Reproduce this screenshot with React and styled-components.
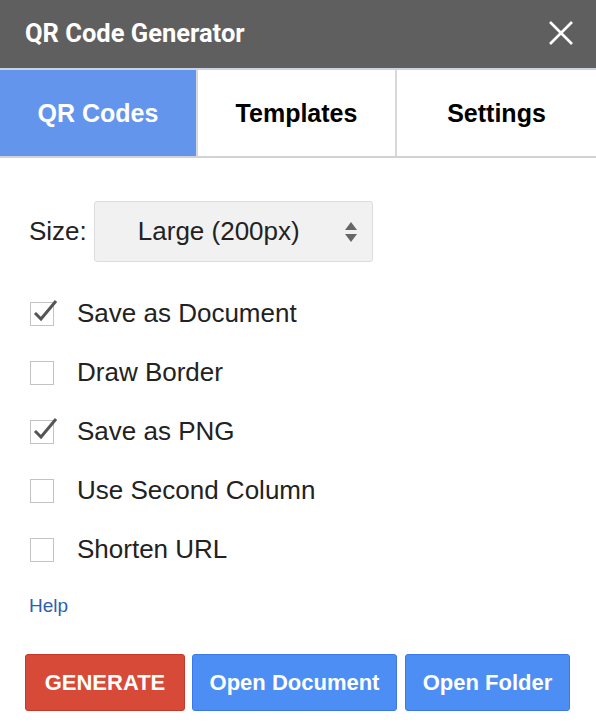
import React from "react";
import styled, { createGlobalStyle } from "styled-components";

const GlobalStyle = createGlobalStyle`
  html, body {
    margin: 0;
    padding: 0;
    background: #ffffff;
  }
  body {
    font-family: "Liberation Sans", Arial, sans-serif;
  }
`;

const Dialog = styled.div`
  width: 596px;
  height: 725px;
  display: flex;
  flex-direction: column;
  background: #fff;
  overflow: hidden;
`;

const TitleBar = styled.div`
  height: 68px;
  background: #5f5f5f;
  display: flex;
  align-items: center;
  justify-content: space-between;
  padding: 0 22px 2px 25px;
  box-sizing: border-box;
`;

const Title = styled.h1`
  margin: 0;
  font-family: Roboto, "Liberation Sans", sans-serif;
  font-weight: 700;
  font-size: 25.5px;
  color: #fff;
`;

const CloseButton = styled.button`
  border: 0;
  background: none;
  padding: 0;
  width: 26px;
  height: 26px;
  display: flex;
  cursor: pointer;
`;

const TabBar = styled.div`
  display: flex;
  height: 90px;
  border-top: 2px solid #c9d4e4;
  border-bottom: 2px solid #d2d2d2;
  box-sizing: border-box;
`;

const Tab = styled.div`
  flex: ${(p) => p.$w} 0 0;
  display: flex;
  align-items: center;
  justify-content: center;
  font-family: "Liberation Sans", Arial, sans-serif;
  font-weight: 700;
  font-size: 25px;
  color: ${(p) => (p.$active ? "#fff" : "#000")};
  background: ${(p) => (p.$active ? "#6495ed" : "#fff")};
  & + & {
    border-left: 2px solid #d8d8d8;
  }
`;

const Body = styled.div`
  padding: 43px 29px 0;
  display: flex;
  flex-direction: column;
`;

const SizeRow = styled.div`
  display: flex;
  align-items: center;
  gap: 7px;
`;

const Label = styled.span`
  font-size: 26px;
  color: #222;
`;

const Select = styled.div`
  width: 279px;
  height: 61px;
  box-sizing: border-box;
  border: 1px solid #dcdcdc;
  border-radius: 3px;
  background: #f1f1f1;
  display: flex;
  align-items: center;
  padding: 0 14px 0 43px;
  font-size: 26px;
  color: #222;
  justify-content: space-between;
`;

const Options = styled.div`
  margin-top: 22px;
  display: flex;
  flex-direction: column;
`;

const OptionRow = styled.label`
  height: 59px;
  display: flex;
  align-items: center;
  gap: 23px;
  font-size: 26px;
  color: #222;
`;

const Box = styled.span`
  position: relative;
  width: 24px;
  height: 24px;
  margin-left: 1px;
  box-sizing: border-box;
  border: 1px solid #c3c3c3;
  background: #fff;
  flex: none;
`;

const Tick = styled.svg`
  position: absolute;
  left: 0;
  top: -7px;
`;

const HelpLink = styled.a`
  margin-top: 15px;
  font-size: 19px;
  color: #2d5fb0;
  text-decoration: none;
  line-height: 24px;
`;

const Buttons = styled.div`
  display: flex;
  margin-top: 36px;
  margin-left: -4px;
`;

const Button = styled.button`
  flex: none;
  height: 57px;
  width: ${(p) => p.$w}px;
  margin-left: ${(p) => p.$gap || 0}px;
  border-radius: 3px;
  border: 1px solid ${(p) => (p.$red ? "#c53727" : "#3b78e7")};
  background: ${(p) => (p.$red ? "#d84a38" : "#4d8ef5")};
  color: #fff;
  font-family: "Liberation Sans", Arial, sans-serif;
  font-weight: 700;
  font-size: 22px;
  padding: 0;
`;

const options = [
  { label: "Save as Document", checked: true },
  { label: "Draw Border", checked: false },
  { label: "Save as PNG", checked: true },
  { label: "Use Second Column", checked: false },
  { label: "Shorten URL", checked: false },
];

const Checkbox = ({ checked }) => (
  <Box>
    {checked && (
      <Tick width="28" height="28" viewBox="0 0 28 28">
        <path d="M4 17 L10 23 L25 5" fill="none" stroke="#555" strokeWidth="3" />
      </Tick>
    )}
  </Box>
);

export default function App() {
  return (
    <>
      <GlobalStyle />
      <Dialog>
        <TitleBar>
          <Title>QR Code Generator</Title>
          <CloseButton>
            <svg width="26" height="26" viewBox="0 0 26 26">
              <path d="M2 2 L24 24 M24 2 L2 24" stroke="#fff" strokeWidth="2.6" />
            </svg>
          </CloseButton>
        </TitleBar>
        <TabBar>
          <Tab $active $w={196}>QR Codes</Tab>
          <Tab $w={197}>Templates</Tab>
          <Tab $w={199}>Settings</Tab>
        </TabBar>
        <Body>
          <SizeRow>
            <Label>Size:</Label>
            <Select>
              <span>Large (200px)</span>
              <svg width="14" height="22" viewBox="0 0 14 22">
                <path d="M7 1 L13 9 H1 Z M1 13 H13 L7 21 Z" fill="#666" />
              </svg>
            </Select>
          </SizeRow>
          <Options>
            {options.map((o) => (
              <OptionRow key={o.label}>
                <Checkbox checked={o.checked} />
                {o.label}
              </OptionRow>
            ))}
          </Options>
          <HelpLink href="#">Help</HelpLink>
          <Buttons>
            <Button $red $w={160}>GENERATE</Button>
            <Button $w={205} $gap={7}>Open Document</Button>
            <Button $w={165} $gap={8}>Open Folder</Button>
          </Buttons>
        </Body>
      </Dialog>
    </>
  );
}
